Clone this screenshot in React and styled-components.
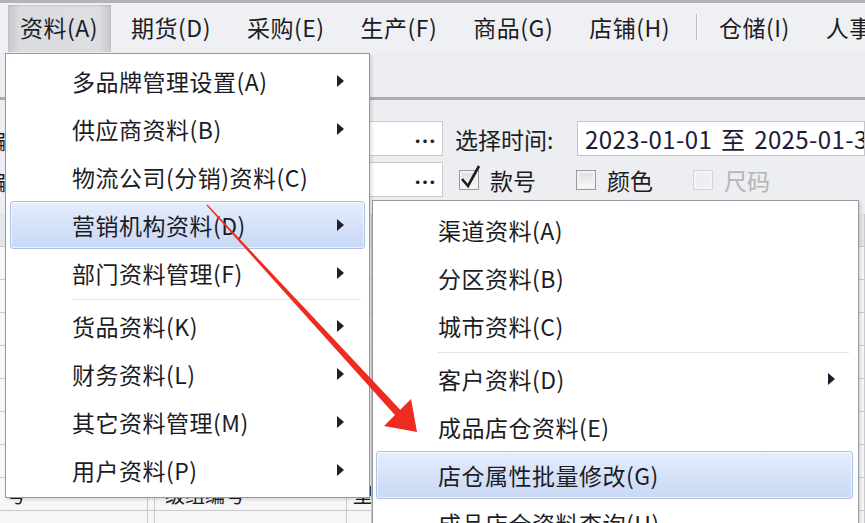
import React from 'react'
import styled, { createGlobalStyle, css } from 'styled-components'

const Global = createGlobalStyle`
  html, body { margin: 0; padding: 0; background: #eceef1; }
  * { box-sizing: border-box; }
`

const Page = styled.div`
  position: relative;
  width: 865px;
  height: 523px;
  overflow: hidden;
  background: #eceef1;
  font-family: "Noto Sans CJK SC", "Microsoft YaHei", sans-serif;
  color: #1c1c24;
`

const TopLine = styled.div`
  height: 3px;
  background: #b2b3b6;
`

const MenuBar = styled.div`
  display: flex;
  align-items: stretch;
  height: 49px;
  padding: 2px 0 0 4px;
  background: #eef0f3;
`

const BarItem = styled.div`
  display: flex;
  align-items: center;
  padding: 0 18px 4px;
  font-size: 23px;
  letter-spacing: 0.5px;
  white-space: nowrap;
  ${p => p.$open && css`
    padding-left: 12px;
    padding-right: 13px;
    margin-left: 4px;
    margin-right: 2px;
    background: linear-gradient(to right, #c6c8cc, #dadce0 12%, #dcdee2 88%, #c6c8cc);
    box-shadow: inset 0 1px 2px rgba(0,0,0,0.12);
  `}
`

const BarSep = styled.div`
  flex: 0 0 1px;
  margin: 9px 4px 12px 8px;
  background: #bcbdc1;
  box-shadow: 1px 0 0 #fbfbfb;
`

const ToolBand = styled.div`
  height: 48px;
  border-bottom: 3px solid #acadb0;
  background: #eceef1;
`

const Form = styled.div`
  display: grid;
  grid-template-columns: 6px 437px 134px 1fr;
  grid-template-rows: 35px 35px;
  row-gap: 6px;
  align-items: center;
  padding-top: 21px;
`

const CutLabel = styled.div`
  overflow: hidden;
  display: flex;
  justify-content: flex-end;
  font-size: 22px;
  white-space: nowrap;
`

const Input = styled.div`
  height: 35px;
  display: flex;
  align-items: center;
  justify-content: flex-end;
  padding-right: 6px;
  background: #fff;
  border: 1px solid #c9cacd;
  font-size: 22px;
  font-weight: bold;
`

const Label = styled.div`
  padding-left: 12px;
  font-size: 23px;
  white-space: nowrap;
`

const DateBox = styled.div`
  height: 35px;
  display: flex;
  align-items: center;
  padding-left: 7px;
  background: #fff;
  border: 1px solid #c4c5c8;
  font-size: 24px;
  letter-spacing: 0.4px;
  word-spacing: 3px;
  color: #1b1b3a;
  white-space: nowrap;
  overflow: hidden;
`

const Checks = styled.div`
  grid-column: 3 / 5;
  display: flex;
  align-items: center;
  padding-left: 16px;
`

const Check = styled.label`
  display: flex;
  align-items: center;
  gap: 11px;
  margin-right: 40px;
  font-size: 23px;
  color: ${p => (p.$disabled ? '#b4b5b8' : '#1c1c24')};
`

const Box = styled.span`
  position: relative;
  width: 20px;
  height: 20px;
  border: 1px solid ${p => (p.$disabled ? '#d2d3d6' : '#9a9b9e')};
  background: ${p => (p.$disabled ? '#eeeff1' : 'linear-gradient(#dcdde0, #fbfbfb)')};
  box-shadow: inset 0 0 0 2px ${p => (p.$disabled ? '#f4f4f5' : '#f2f2f3')};
`

const Table = styled.div`
  margin-top: 17px;
  display: grid;
  grid-template-columns: 148px 7px 192px 25px 486px 7px;
  grid-auto-rows: 33px;
`

const Cell = styled.div`
  display: flex;
  align-items: center;
  padding-left: ${p => p.$pad || 6}px;
  border-bottom: 1px solid #c9cacd;
  border-right: 1px solid #c9cacd;
  background: ${p => (p.$head ? '#e4e6ea' : '#f7f7f8')};
  font-size: 20px;
  overflow: hidden;
  white-space: nowrap;
`

const Menu = styled.div`
  position: absolute;
  left: ${p => p.$x}px;
  top: ${p => p.$y}px;
  width: ${p => p.$w}px;
  padding: ${p => p.$pad};
  background: #fff;
  border: 1px solid #979899;
  box-shadow: 2px 2px 3px rgba(0,0,0,0.12);
`

const Item = styled.div`
  display: flex;
  align-items: center;
  height: 48px;
  padding-left: 61px;
  border: 1px solid transparent;
  border-radius: 3px;
  font-size: 23px;
  letter-spacing: 0.5px;
  white-space: nowrap;
  ${p => p.$active && css`
    background: linear-gradient(#e7eefc, #d5e2f8 50%, #c9d9f5);
    border-color: #adc2e6;
    box-shadow: inset 0 0 0 1px rgba(255,255,255,0.6);
  `}
`

const ItemText = styled.span`
  flex: 1;
`

const SubArrow = styled.span`
  width: 0;
  height: 0;
  margin-right: ${p => p.$r}px;
  border-left: 7px solid #1d1d2e;
  border-top: 6px solid transparent;
  border-bottom: 6px solid transparent;
`

const Sep = styled.div`
  height: 5px;
  margin-left: 62px;
  margin-right: 4px;
  padding-top: 2px;
  &::before {
    content: '';
    display: block;
    height: 1px;
    background: #e2e3e5;
    box-shadow: 0 1px 0 #fff;
  }
`

const Overlay = styled.svg`
  position: absolute;
  left: 0;
  top: 0;
  pointer-events: none;
`

const mainItems = [
  ['多品牌管理设置(A)', true],
  ['供应商资料(B)', true],
  ['物流公司(分销)资料(C)', false],
  ['营销机构资料(D)', true, true],
  ['部门资料管理(F)', true],
  'sep',
  ['货品资料(K)', true],
  ['财务资料(L)', true],
  ['其它资料管理(M)', true],
  ['用户资料(P)', true],
]

const subItems = [
  ['渠道资料(A)'],
  ['分区资料(B)'],
  ['城市资料(C)'],
  'sep',
  ['客户资料(D)', true],
  ['成品店仓资料(E)'],
  ['店仓属性批量修改(G)', false, true],
  ['成品店仓资料查询(H)'],
]

const barItems = ['期货(D)', '采购(E)', '生产(F)', '商品(G)', '店铺(H)']

const MenuList = ({ items, arrowRight }) =>
  items.map((it, i) =>
    it === 'sep' ? (
      <Sep key={i} />
    ) : (
      <Item key={i} $active={it[2]}>
        <ItemText>{it[0]}</ItemText>
        {it[1] && <SubArrow $r={arrowRight} />}
      </Item>
    )
  )

const tableRows = [
  ['', '', '', '', ''],
  ['', '', '', '', '店'],
  ['', '', '', '', ''],
  ['', '', '', '', '主'],
  ['', '', '', '', ''],
  ['', '', '', '', ''],
  ['', '', '', '', ':'],
  ['', '', '', '', ''],
  ['号', '', '级组编号', '型', ''],
  ['', '', '', '', ''],
]

export default function App() {
  return (
    <Page>
      <Global />
      <TopLine />
      <MenuBar>
        <BarItem $open>资料(A)</BarItem>
        {barItems.map(t => (
          <BarItem key={t}>{t}</BarItem>
        ))}
        <BarSep />
        <BarItem>仓储(I)</BarItem>
        <BarItem>人事</BarItem>
      </MenuBar>
      <ToolBand />

      <Form>
        <CutLabel>编</CutLabel>
        <Input>⋯</Input>
        <Label>选择时间:</Label>
        <DateBox>2023-01-01 至 2025-01-31</DateBox>
        <CutLabel>编</CutLabel>
        <Input>⋯</Input>
        <Checks>
          <Check>
            <Box>
              <svg width="26" height="26" viewBox="0 0 26 26" style={{ position: 'absolute', left: -2, top: -8 }}>
                <path d="M4 16 L10 23 L21 3" fill="none" stroke="#1d1d22" strokeWidth="2.6" />
              </svg>
            </Box>
            款号
          </Check>
          <Check>
            <Box />
            颜色
          </Check>
          <Check $disabled>
            <Box $disabled />
            尺码
          </Check>
        </Checks>
      </Form>

      <Table>
        {tableRows.map((r, i) => (
          <React.Fragment key={i}>
            <Cell $head={i === 0}>{r[0]}</Cell>
            <Cell $head={i === 0} />
            <Cell $head={i === 0} $pad={10}>{r[2]}</Cell>
            <Cell $head={i === 0}>{r[3]}</Cell>
            <Cell $head={i === 0} />
            <Cell $head={i === 0} $pad={0}>{r[4]}</Cell>
          </React.Fragment>
        ))}
      </Table>

      <Menu $x={5} $y={53} $w={365} $pad="3px 4px">
        <MenuList items={mainItems} arrowRight={20} />
      </Menu>

      <Menu $x={372} $y={200} $w={487} $pad="5px 5px 0 3px">
        <MenuList items={subItems} arrowRight={17} />
      </Menu>

      <Overlay width="865" height="523" viewBox="0 0 865 523">
        <polygon points="207.4,204.6 206.6,205.4 397.2,417.6 402.8,412.4" fill="#ee2b20" />
        <polygon points="411,399 417,432 384,426" fill="#ee2b20" />
      </Overlay>
    </Page>
  )
}
